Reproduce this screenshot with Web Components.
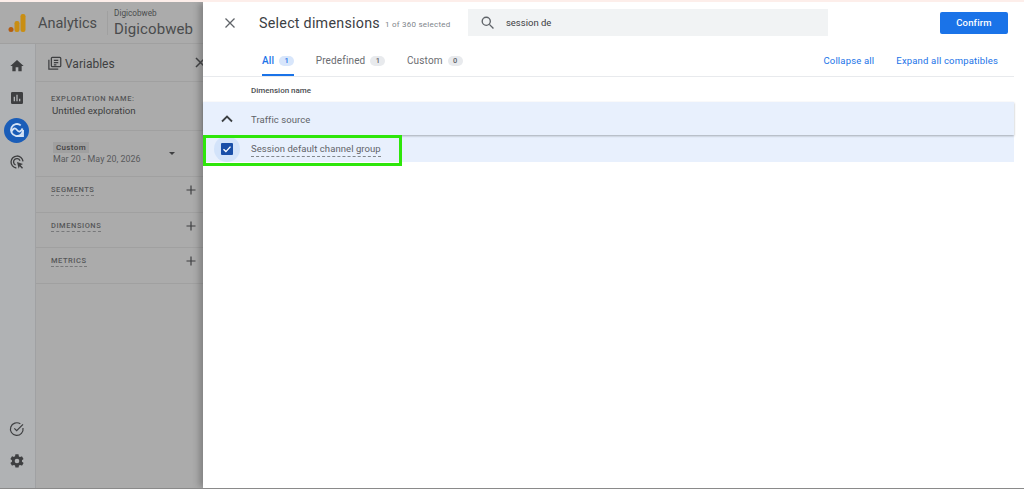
<!DOCTYPE html>
<html><head><meta charset="utf-8"><style>
html,body{margin:0;padding:0;height:489px;overflow:hidden;background:#fff;font-family:Roboto,"Liberation Sans",sans-serif}
</style></head><body>
<ga-shell>
<ga-backdrop></ga-backdrop>
<ga-drawer></ga-drawer>
</ga-shell>
<script>
const def=(n,html)=>customElements.define(n,class extends HTMLElement{constructor(){super();this.attachShadow({mode:'open'}).innerHTML=html}});
def('ga-shell',`<style>:host{display:block;position:relative;width:1024px;height:489px;overflow:hidden;box-sizing:border-box;border-top:2px solid #fdeeea;border-bottom:1px solid #8a8a8a;background:#fff}</style><slot></slot>`);
def('ga-backdrop',`<style>
:host{display:flex;flex-direction:column;width:203px;height:100%;background:#ababab;color:#3e3f41;overflow:hidden}
.hd{height:42px;flex:none;display:flex;align-items:center;border-bottom:1px solid #a0a0a0;box-sizing:border-box;padding-left:8px}
.an{font-size:14.5px;color:#4a4b4d;margin:2px 0 0 12px}
.sep{width:1px;height:24px;background:#a0a0a0;margin:0 6px 0 10px}
.acc{display:flex;flex-direction:column;color:#4a4b4d;margin-top:1px}
.acc small{font-size:8.2px;line-height:9px;margin-bottom:3px}.acc b{font-weight:400;font-size:15px;line-height:17px;letter-spacing:.1px}
.bd{flex:1;display:flex;min-height:0}
nav{width:36px;flex:none;background:#b0b2b4;border-right:1px solid #a0a1a3;display:flex;flex-direction:column;align-items:center;padding:6px 2px 0 0;box-sizing:border-box}
nav svg{display:block}
nav .i{height:32px;display:flex;align-items:center;justify-content:center}
.act{width:25px;height:25px;border-radius:50%;background:#1a5db8;display:flex;align-items:center;justify-content:center}
.sp{flex:1}
.pn{flex:1;display:flex;flex-direction:column;min-width:0}
.t{height:38px;display:flex;align-items:center;padding:2px 0 0 11px;border-bottom:1px solid #a0a0a0;font-size:12px;gap:3px;box-sizing:border-box;color:#3e3f41;position:relative}
.x{position:absolute;right:-3px;top:13px}
.sec{border-bottom:1px solid #a0a0a0;box-sizing:border-box;padding-left:15px}
.nm{height:49px;padding-top:12px}
.lb{font-size:7.5px;font-weight:500;letter-spacing:.55px;color:#565759;line-height:9px}
.v{font-size:9.7px;line-height:12px;margin-top:2px;padding-left:1px;color:#3e3f41}
.dt{height:46px;padding-top:11px;position:relative}
.chip{display:block;width:fit-content;background:#a0a0a0;font-size:8px;font-weight:500;letter-spacing:.35px;padding:0 3px;line-height:11px;margin-left:2px;color:#444}
.d{font-size:8.9px;color:#58595b;line-height:12px;margin:0 0 0 2px}
.car{position:absolute;right:28px;top:21px;width:0;height:0;border:3px solid transparent;border-top:3.5px solid #3e3f41;border-bottom:0}
.row{height:35.5px;display:flex;align-items:center;justify-content:space-between;padding:0 6px 8px 15px;font-size:7.5px;font-weight:500;letter-spacing:.55px;color:#565759}
.row span{border-bottom:1px dashed #77787a;line-height:9px;padding-bottom:1px;margin-top:1px}
</style>
<div class="hd">
<svg width="18" height="20" viewBox="0 0 18 20"><rect x="12.5" y="1" width="5" height="18" rx="2.2" fill="#c98e13"/><rect x="6.5" y="8" width="5" height="11" rx="2.2" fill="#c98e13"/><circle cx="3" cy="16.5" r="2.5" fill="#b35d12"/></svg>
<span class="an">Analytics</span><span class="sep"></span>
<span class="acc"><small>Digicobweb</small><b>Digicobweb</b></span></div>
<div class="bd"><nav>
<div class="i"><svg width="16" height="16" viewBox="0 0 24 24" fill="#3e3f41"><path d="M10 20v-6h4v6h5v-8h3L12 3 2 12h3v8z"/></svg></div>
<div class="i"><svg width="16" height="16" viewBox="0 0 24 24" fill="#3e3f41"><path d="M19 3H5a2 2 0 0 0-2 2v14a2 2 0 0 0 2 2h14a2 2 0 0 0 2-2V5a2 2 0 0 0-2-2zM9 17H7v-7h2zm4 0h-2V7h2zm4 0h-2v-4h2z"/></svg></div>
<div class="i"><span class="act"><svg width="18" height="18" viewBox="0 0 24 24" fill="none" stroke="#d5e3f5" stroke-width="2.4"><path d="M20 12a8 8 0 1 1-3-6.200"/><path d="M4.500 14c3-5 5-5 7.500-2s5 3 7.500-2"/><path d="M20 12v8h-8"/></svg></span></div>
<div class="i"><svg width="16" height="16" viewBox="0 0 24 24" fill="none" stroke="#3e3f41" stroke-width="2"><path d="M11 21a9 9 0 1 1 10-10"/><path d="M10 16.500a5 5 0 1 1 6.500-6.500"/><path d="M12 12l9 3-3.500 2 3.500 3.500-1.500 1.500-3.500-3.500-1.500 3.500z" fill="#3e3f41" stroke="none"/></svg></div>
<div class="sp"></div>
<div class="i"><svg width="16" height="16" viewBox="0 0 24 24" fill="none" stroke="#3e3f41" stroke-width="1.800"><path d="M21 10.500A9.500 9.500 0 1 1 17 4.300"/><path d="M8 11l3.500 3.500L21 5"/></svg></div>
<div class="i" style="margin-bottom:11px"><svg width="16" height="16" viewBox="0 0 24 24" fill="#3e3f41"><path d="M19.400 13c.1-.3.1-.7.1-1s0-.7-.1-1l2.100-1.600c.2-.2.2-.4.1-.6l-2-3.500c-.1-.2-.4-.3-.6-.2l-2.500 1c-.5-.4-1.100-.7-1.700-1l-.4-2.600C14.400 2.200 14.200 2 14 2h-4c-.2 0-.4.2-.5.4l-.4 2.600c-.6.300-1.200.600-1.700 1l-2.500-1c-.2-.1-.5 0-.6.200l-2 3.500c-.1.200-.1.400.1.600L4.500 11c0 .3-.1.700-.1 1s0 .7.1 1l-2.100 1.600c-.2.200-.2.400-.1.600l2 3.500c.1.200.4.300.6.200l2.500-1c.5.400 1.100.700 1.700 1l.4 2.600c.1.200.3.400.5.400h4c.2 0 .4-.2.5-.4l.4-2.600c.6-.3 1.200-.6 1.700-1l2.500 1c.2.100.5 0 .6-.2l2-3.500c.1-.2.1-.4-.1-.6zM12 15.500a3.500 3.500 0 1 1 0-7 3.500 3.500 0 0 1 0 7z"/></svg></div>
</nav>
<div class="pn">
<div class="t"><svg width="15" height="15" viewBox="0 0 24 24" fill="none" stroke="#3e3f41" stroke-width="2"><rect x="7" y="2" width="15" height="15" rx="1.500"/><path d="M3 6v15h15M11 7h7M11 10.500h7M11 14h4"/></svg>Variables<svg class="x" width="11" height="11" viewBox="0 0 11 11" stroke="#3e3f41" stroke-width="1.500"><path d="M1 1l9 9M10 1l-9 9"/></svg></div>
<div class="sec nm"><div class="lb">EXPLORATION NAME:</div><div class="v">Untitled exploration</div></div>
<div class="sec dt"><span class="chip">Custom</span><div class="d">Mar 20 - May 20, 2026</div><i class="car"></i></div>
<div class="sec row"><span>SEGMENTS</span><svg width="12" height="12" viewBox="0 0 12 12" stroke="#3e3f41" stroke-width="1.200"><path d="M6 1.500v9M1.500 6h9"/></svg></div>
<div class="sec row"><span>DIMENSIONS</span><svg width="12" height="12" viewBox="0 0 12 12" stroke="#3e3f41" stroke-width="1.200"><path d="M6 1.500v9M1.500 6h9"/></svg></div>
<div class="sec row"><span>METRICS</span><svg width="12" height="12" viewBox="0 0 12 12" stroke="#3e3f41" stroke-width="1.200"><path d="M6 1.500v9M1.500 6h9"/></svg></div>
</div></div>`);
customElements.define('ga-tabc',class extends HTMLElement{constructor(){super();const s=this.attachShadow({mode:'open'});s.innerHTML=`<style>
:host{display:flex;align-items:center;gap:5px;font-size:10px;letter-spacing:.15px;color:#6a6c70;position:relative;box-sizing:border-box;padding-top:2px}
:host([active]){color:#1a73e8;font-weight:500}
:host([active])::after{content:"";position:absolute;left:0;right:0;bottom:0;height:2px;background:#1a73e8}
i{font-style:normal;font-size:7.5px;font-weight:500;background:#e8eaed;color:#5f6368;border-radius:6px;width:15px;height:10px;line-height:10px;text-align:center;display:block;letter-spacing:0}
:host([active]) i{background:#d8e6fb;color:#1a73e8}
</style><slot></slot><i>${this.getAttribute('n')}</i>`}});
def('ga-drawer',`<style>
:host{position:absolute;left:203px;top:0;right:0;bottom:0;background:#fff;box-shadow:-5px 0 6px -1px rgba(60,60,60,.35);display:flex;flex-direction:column;color:#3c4043}
.top{height:41px;flex:none;display:flex;align-items:center;padding:0 16px 0 21px;box-sizing:border-box}
.cl{margin-right:23px}
h1{margin:0;font-weight:400;font-size:14.300px;letter-spacing:.25px;color:#3c4043}
.cnt{font-size:8px;color:#80868b;margin:4px 0 0 5px;letter-spacing:.25px;width:83px}
.s{width:360px;height:27px;background:#f1f3f4;display:flex;align-items:center;padding-left:12px;box-sizing:border-box;font-size:9.500px;color:#3c4043;gap:11px}
.cf{margin-left:auto;background:#1a73e8;color:#fff;font-size:9.500px;font-weight:500;letter-spacing:.2px;width:68px;height:22px;border-radius:2px;display:flex;align-items:center;justify-content:center}
.tabs{height:33px;flex:none;display:flex;align-items:stretch;margin-right:10px;padding-left:59px;border-bottom:1px solid #e8eaed;box-sizing:content-box}
.tabs ga-tabc{margin-right:21.5px}
.lk{margin-left:auto;display:flex;gap:22px;align-items:center;font-size:9.500px;color:#1a73e8;padding:1px 16px 0 0;letter-spacing:.17px}
.hdr{height:25px;flex:none;display:flex;align-items:center;padding:2px 0 0 48px;font-size:8px;font-weight:500;color:#4b4e52;margin-right:10px;box-sizing:border-box}
.grp{height:33px;flex:none;margin-right:10px;background:#e8f0fd;display:flex;align-items:center;padding:2px 0 0 18px;font-size:9.500px;color:#5f6368;letter-spacing:.07px;box-shadow:0 1px 2px rgba(60,64,67,.4);position:relative;box-sizing:border-box;gap:18px}
.grp svg{margin-top:-2px}
.it{height:27px;flex:none;margin-right:10px;background:#e8f0fd;display:flex;align-items:center;padding-left:11px;font-size:9.500px;color:#5f6368;letter-spacing:.07px;gap:11px;box-sizing:border-box}
.halo{width:26px;height:26px;border-radius:50%;background:#d3e3fa;display:flex;align-items:center;justify-content:center}
.cb{width:12px;height:12px;background:#1a4fa8;border-radius:1px;display:block}
.it span:last-child{border-bottom:1px dashed #80868b;line-height:12px;padding-bottom:1px;margin-top:2px}
.mark{position:absolute;left:0;top:133px;width:199px;height:31px;border:3px solid #2ee60a;box-sizing:border-box;pointer-events:none}
</style>
<div class="top"><svg class="cl" width="12" height="12" viewBox="0 0 12 12" stroke="#5f6368" stroke-width="1.300"><path d="M1.500 1.500l9 9M10.500 1.500l-9 9"/></svg>
<h1>Select dimensions</h1><span class="cnt">1 of 360 selected</span>
<div class="s"><svg width="15" height="15" viewBox="0 0 24 24" fill="none" stroke="#5f6368" stroke-width="2.200"><circle cx="10" cy="10" r="6.500"/><path d="M15 15l6.500 6.500"/></svg>session de</div>
<div class="cf">Confirm</div></div>
<div class="tabs"><ga-tabc active n="1">All</ga-tabc><ga-tabc n="1">Predefined</ga-tabc><ga-tabc n="0">Custom</ga-tabc><div class="lk"><span>Collapse all</span><span>Expand all compatibles</span></div></div>
<div class="hdr">Dimension name</div>
<div class="grp"><svg width="12" height="8" viewBox="0 0 12 8" fill="none" stroke="#3c4043" stroke-width="1.800"><path d="M1 6.500L6 1.500l5 5"/></svg>Traffic source</div>
<div class="it"><span class="halo"><svg class="cb" viewBox="0 0 12 12"><path d="M2.500 6.200l2.400 2.400 4.600-5" fill="none" stroke="#fff" stroke-width="1.400"/></svg></span><span>Session default channel group</span></div>
<div class="mark"></div>`);
</script></body></html>
